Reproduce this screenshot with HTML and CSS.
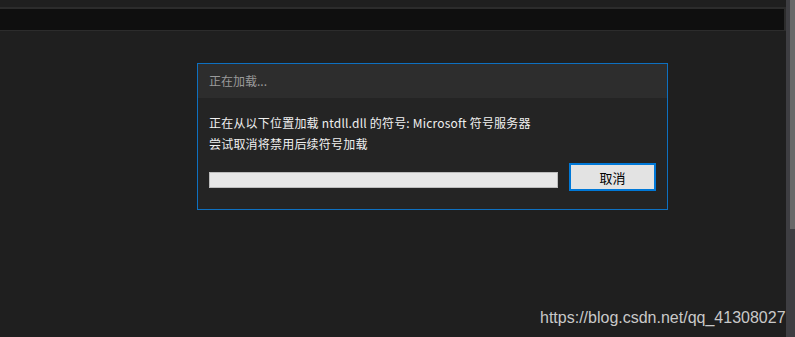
FILE: index.html
```html
<!DOCTYPE html>
<html lang="zh-CN">
<head>
<meta charset="utf-8">
<link rel="stylesheet" href="styles.css">
</head>
<body>
<div class="app">
  <div class="main">
    <div class="topbar"></div>
    <div class="workspace">
      <div class="dialog">
        <div class="dialog-title">正在加载...</div>
        <div class="dialog-body">
          <p class="line">正在从以下位置加载 ntdll.dll 的符号: Microsoft 符号服务器</p>
          <p class="line">尝试取消将禁用后续符号加载</p>
          <div class="actions">
            <div class="progress"></div>
            <button class="btn">取消</button>
          </div>
        </div>
      </div>
    </div>
  </div>
  <div class="scrollbar"><div class="thumb"></div></div>
</div>
<div class="watermark">https://blog.csdn.net/qq_41308027</div>
</body>
</html>
```
FILE: styles.css
```css
html, body {
  margin: 0;
  padding: 0;
  height: 100%;
  background: #1f1f1f;
  overflow: hidden;
}
.app {
  display: flex;
  height: 337px;
  font-family: "Noto Sans CJK SC", "Noto Sans", sans-serif;
}
.main {
  width: 786px;
  display: flex;
  flex-direction: column;
}
.topbar {
  margin-top: 7px;
  height: 21px;
  width: 784px;
  background: #0f0f0f;
  border-top: 2px solid #2c2c2c;
  border-bottom: 1px solid #2c2c2c;
  border-right: 2px solid #2c2c2c;
}
.workspace {
  flex: 1;
  padding: 32px 0 0 197px;
}
.dialog {
  width: 469px;
  height: 145px;
  border: 1px solid #0e70c0;
  background: #242424;
  display: flex;
  flex-direction: column;
}
.dialog-title {
  height: 34px;
  background: #2d2d2d;
  color: #9a9a9a;
  font-size: 12px;
  line-height: 33px;
  padding-left: 11px;
}
.dialog-body {
  padding: 14px 11px 0 11px;
}
.line {
  margin: 0;
  color: #f0f0f0;
  font-size: 12px;
  letter-spacing: 0.2px;
  line-height: 21px;
}
.actions {
  display: flex;
  align-items: flex-start;
  margin-top: 9px;
}
.progress {
  margin-top: 9px;
  width: 348px;
  height: 14px;
  background: #e6e6e6;
  border: 1px solid #bcbcbc;
}
.btn {
  margin-left: 11px;
  width: 87px;
  height: 28px;
  box-sizing: border-box;
  border: 2px solid #0078d7;
  background: #e3e3e3;
  color: #000;
  font-family: "Noto Sans CJK SC", sans-serif;
  font-size: 13px;
  padding: 0;
}
.scrollbar {
  width: 9px;
  height: 337px;
  background: #3e3e42;
  display: flex;
  justify-content: flex-end;
}
.thumb {
  width: 5px;
  height: 229px;
  background: #686868;
}
.watermark {
  position: absolute;
  left: 540px;
  top: 308px;
  color: #c9c9c9;
  font-family: "Liberation Sans", Arial, sans-serif;
  font-size: 16px;
  line-height: 20px;
}
```
